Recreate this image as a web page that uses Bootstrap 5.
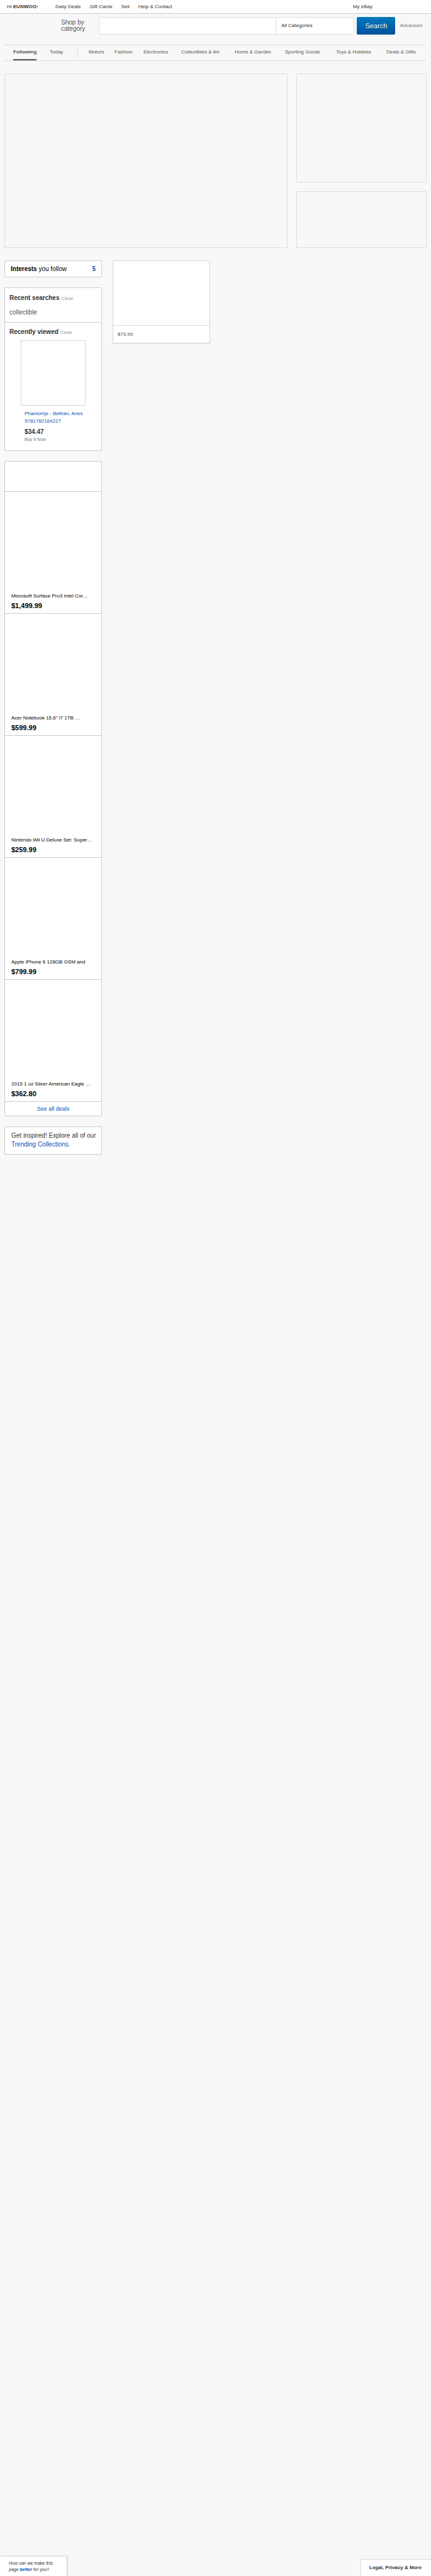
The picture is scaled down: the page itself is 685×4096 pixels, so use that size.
<!DOCTYPE html>
<html lang="en">
<head>
<meta charset="utf-8">
<meta name="viewport" content="width=device-width, initial-scale=1">
<title>My eBay - Following</title>
<link href="https://cdn.jsdelivr.net/npm/bootstrap@5.3.0/dist/css/bootstrap.min.css" rel="stylesheet">
<style>
  body { font-family: "Liberation Sans", Arial, sans-serif; font-size: 8px; line-height: 12px; color: #333; background: #f8f8f8; }
  a { color: #0654ba; text-decoration: none; }
  .fs-7 { font-size: 7px; line-height: 10px; }
  .fs-10 { font-size: 10px; line-height: 14px; }
  .fs-11 { font-size: 11px; line-height: 16px; }
  .topbar { height: 22px; padding: 0 11px; border-bottom: 1px solid #ccc; }
  .topbar a { color: #333; }
  .toplinks { gap: 14px; margin-left: 28px; }
  .my-ebay { margin-right: 82px; }
  .searchbar { padding: 5px 14px 16px 97px; }
  .shop-by { width: 60px; font-size: 10px; line-height: 10px; color: #555; text-align: left; }
  .search-box { display: grid; grid-template-columns: 283fr 125fr; }
  .search-box .form-control, .search-box .form-select { min-width: 0; height: 28px; font-size: 8px; border: 1px solid #ddd; padding: 0 8px; color: #333; background: #fff; }
  .search-box .form-control { border-radius: 2px 0 0 2px; }
  .search-box .form-select { border-left: 0; border-radius: 0 2px 2px 0; }
  .search-go { width: 61px; height: 28px; margin: 0 7px 0 4px; padding: 0; border: 0; border-radius: 2px; color: #fff; font-size: 11px; background: linear-gradient(#0079bc, #00509d); text-shadow: 0 1px 1px rgba(0,0,0,.3); }
  .muted-link { color: #999; font-size: 8px; }
  .advanced { color: #777; }
  .cat-nav { margin: 0 7px; padding-left: 14px; height: 26px; border: solid #ddd; border-width: 1px 0; display: grid; grid-template-columns: 58fr 44fr 18fr 41fr 46fr 60fr 85fr 80fr 81fr 80fr 64fr; white-space: nowrap; }
  .cat-nav a { color: #555; line-height: 22px; justify-self: start; }
  .cat-nav a.active { font-weight: bold; border-bottom: 2px solid #555; }
  .divider { width: 1px; height: 17px; margin-top: 4px; background: #ddd; }
  .hero { margin: 20px 7px 0; gap: 14px; height: 277px; display: grid; grid-template-columns: 450fr 207fr; }
  .hero-side { display: grid; gap: 14px; grid-template-rows: 173fr 90fr; }
  .frame { border: 1px solid #ddd; }
  .feed { margin: 20px 7px 0; display: grid; grid-template-columns: repeat(4, 1fr); column-gap: 17px; align-items: start; }
  .panel { background: #fff; border: 1px solid #ccc; border-radius: 2px; }
  .side { gap: 16px; }
  .interests { height: 27px; padding: 0 9px; color: #000; }
  .recent { padding: 9px 7px 0; height: 55px; border-bottom: 1px solid #ccc; }
  .recent .term { display: block; margin-top: 8px; color: #555; }
  .viewed { padding: 8px 7px 12px; }
  .viewed-img { height: 104px; margin: 5px 18px 0; border: 1px solid #d5d5d5; }
  .viewed-info { margin: 7px 0 0 24px; }
  .deals-head { height: 47px; }
  .deal { height: 194px; padding: 0 10px 4px; border-top: 1px solid #ccc; color: #000; }
  .deal-title { line-height: 14px; color: #000; }
  .see-all { height: 23px; font-size: 9px; border-top: 1px solid #ccc; }
  .trending { padding: 7px 7px 8px 10px; white-space: nowrap; }
  .item { border-color: #d5d5d5; box-shadow: 0 1px 1px rgba(0,0,0,.08); }
  .item-img { height: 103px; border-bottom: 1px solid #ddd; }
  .item-price { height: 27px; padding: 0 7px; color: #555; }
  .feedback { width: 107px; height: 32px; padding: 6px 0 0 14px; background: #fff; border: solid #ddd; border-width: 1px 1px 0 0; border-radius: 0 2px 0 0; box-shadow: 1px 0 2px rgba(0,0,0,.12); }
  .legal { width: 112px; height: 27px; padding-left: 13px; background: #fff; border: solid #ddd; border-width: 1px 0 0 1px; }
  .legal a { color: #333; }
</style>
</head>
<body class="min-vh-100 d-flex flex-column">
<header>
  <div class="topbar bg-white d-flex align-items-center">
    <span>Hi <b>EUNWOO</b>!</span>
    <nav class="toplinks d-flex" aria-label="Site">
      <a href="#">Daily Deals</a><a href="#">Gift Cards</a><a href="#">Sell</a><a href="#">Help &amp; Contact</a>
    </nav>
    <a class="my-ebay ms-auto" href="#">My eBay</a>
  </div>
  <form class="searchbar d-flex align-items-center">
    <button type="button" class="shop-by border-0 bg-transparent p-0 flex-shrink-0">Shop by<br>category</button>
    <div class="search-box flex-grow-1">
      <input class="form-control" type="text" aria-label="Search for anything">
      <select class="form-select" aria-label="Category"><option>All Categories</option></select>
    </div>
    <button type="submit" class="search-go flex-shrink-0">Search</button>
    <a class="advanced" href="#">Advanced</a>
  </form>
  <nav class="cat-nav" aria-label="Categories">
    <a class="active" href="#">Following</a>
    <a href="#">Today</a>
    <span class="divider"></span>
    <a href="#">Motors</a>
    <a href="#">Fashion</a>
    <a href="#">Electronics</a>
    <a href="#">Collectibles &amp; Art</a>
    <a href="#">Home &amp; Garden</a>
    <a href="#">Sporting Goods</a>
    <a href="#">Toys &amp; Hobbies</a>
    <a href="#">Deals &amp; Gifts</a>
  </nav>
</header>
<main>
  <section class="hero">
    <div class="frame"></div>
    <div class="hero-side">
      <div class="frame"></div>
      <div class="frame"></div>
    </div>
  </section>
  <div class="feed">
    <aside class="side d-flex flex-column">
      <section class="panel interests fs-10 d-flex align-items-center justify-content-between">
        <span><b>Interests</b> you follow</span><a class="fw-bold" href="#">5</a>
      </section>
      <section class="panel">
        <div class="recent">
          <div class="fs-10"><b>Recent searches</b> <a class="muted-link" href="#">Clear</a></div>
          <a class="term fs-10" href="#">collectible</a>
        </div>
        <div class="viewed">
          <div class="fs-10"><b>Recently viewed</b> <a class="muted-link" href="#">Clear</a></div>
          <div class="viewed-img"></div>
          <div class="viewed-info">
            <a href="#">Phantomjs - Beltran, Aries<br>9781782164227</a>
            <div class="fs-10 fw-bold mt-1">$34.47</div>
            <div class="fs-7 advanced">Buy It Now</div>
          </div>
        </div>
      </section>
      <section class="panel">
        <div class="deals-head"></div>
        <div class="deal d-flex flex-column justify-content-end"><a class="deal-title text-truncate" href="#">Microsoft Surface Pro3 Intel Cor…</a><b class="fs-11">$1,499.99</b></div>
        <div class="deal d-flex flex-column justify-content-end"><a class="deal-title text-truncate" href="#">Acer Notebook 15.6" i7 1TB …</a><b class="fs-11">$599.99</b></div>
        <div class="deal d-flex flex-column justify-content-end"><a class="deal-title text-truncate" href="#">Nintendo Wii U Deluxe Set: Super…</a><b class="fs-11">$259.99</b></div>
        <div class="deal d-flex flex-column justify-content-end"><a class="deal-title text-truncate" href="#">Apple iPhone 6 128GB GSM and</a><b class="fs-11">$799.99</b></div>
        <div class="deal d-flex flex-column justify-content-end"><a class="deal-title text-truncate" href="#">2015 1 oz Silver American Eagle …</a><b class="fs-11">$362.80</b></div>
        <a class="see-all d-flex align-items-center justify-content-center" href="#">See all deals</a>
      </section>
      <section class="panel trending fs-10">Get inspired! Explore all of our<br><a href="#">Trending Collections</a>.</section>
    </aside>
    <article class="panel item">
      <div class="item-img"></div>
      <div class="item-price d-flex align-items-center">$79.95</div>
    </article>
  </div>
</main>
<footer class="mt-auto d-flex justify-content-between align-items-end">
  <div class="feedback fs-7">How can we make this<br>page <a class="fw-bold" href="#">better</a> for you?</div>
  <div class="legal d-flex align-items-center fw-bold"><a href="#">Legal, Privacy &amp; More</a></div>
</footer>
<script src="https://cdn.jsdelivr.net/npm/bootstrap@5.3.0/dist/js/bootstrap.bundle.min.js"></script>
</body>
</html>
